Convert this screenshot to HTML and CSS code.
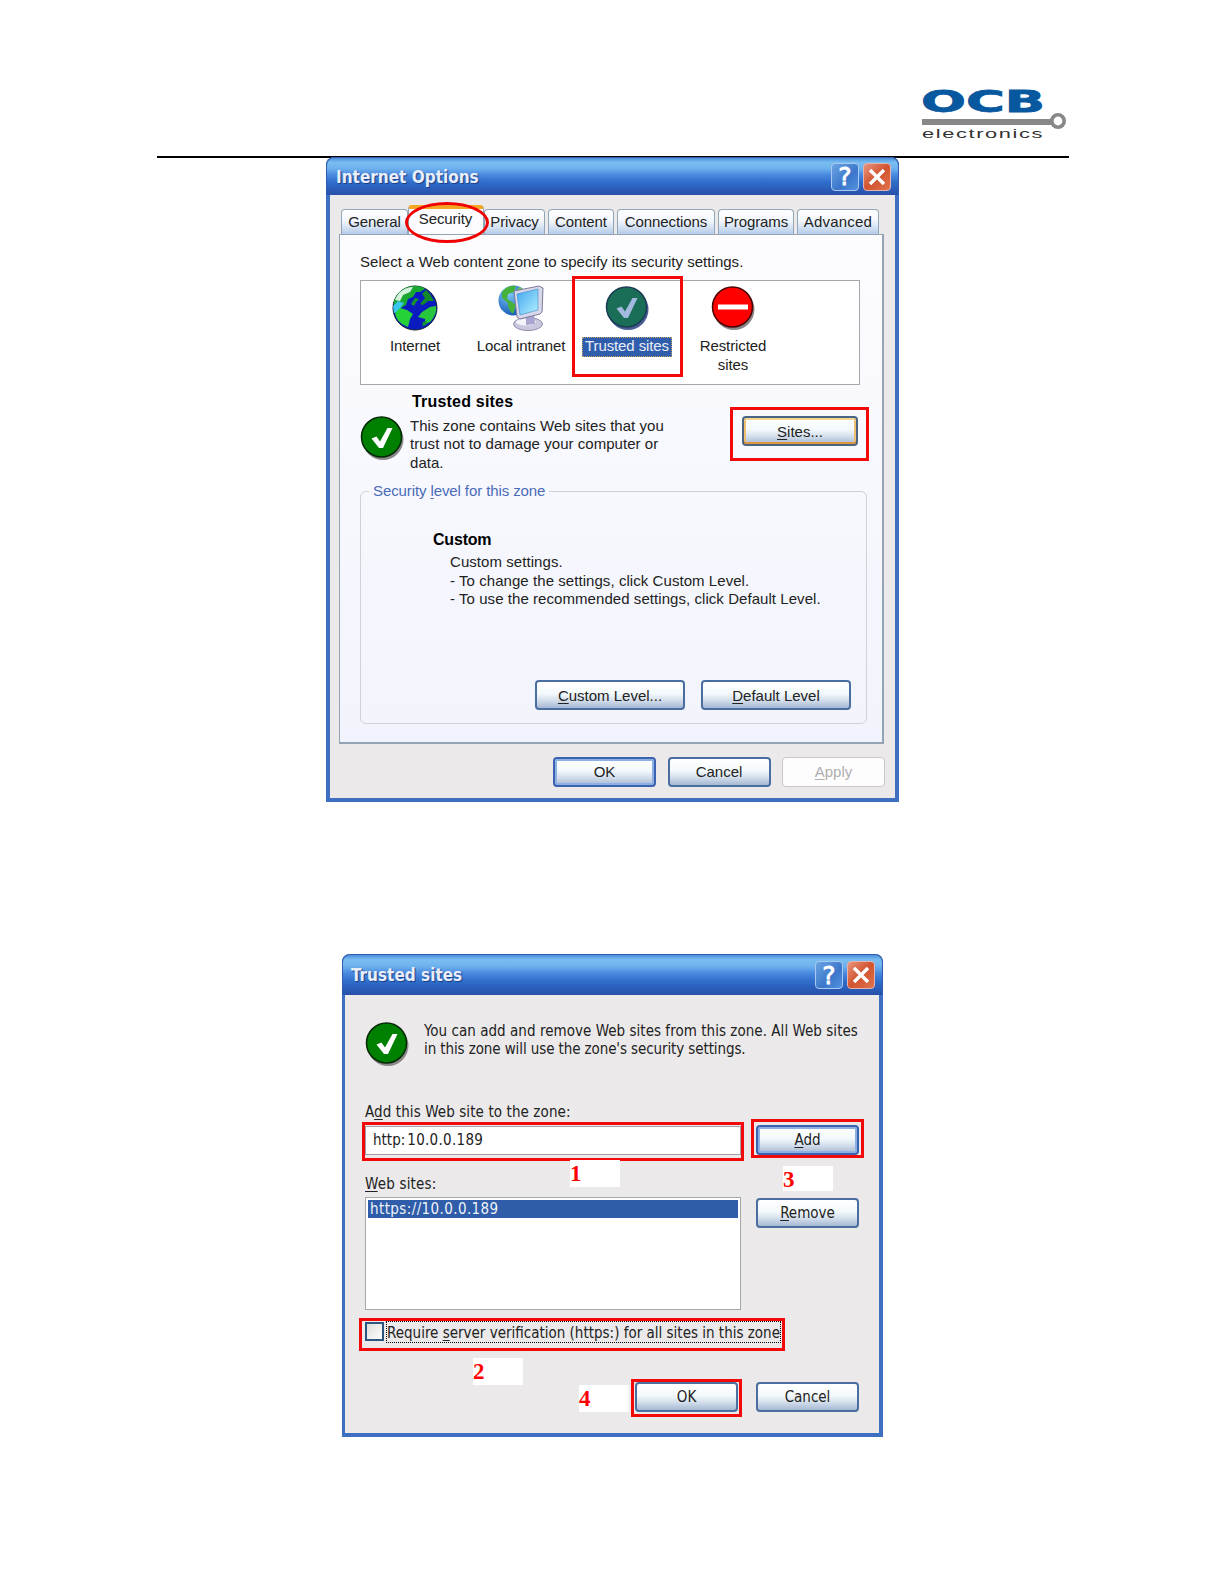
FILE: index.html
```html
<!DOCTYPE html>
<html lang="en">
<head>
	<meta charset="UTF-8">
	<title>Internet Options - Trusted sites</title>
	<link rel="stylesheet" href="styles.css">
</head>
<body>
<!-- shared icons -->
<svg class="defs">
	<defs>
		<linearGradient id="scr" x1="0" y1="0" x2="1" y2="1">
			<stop offset="0" stop-color="#3fa6f0"/>
			<stop offset="1" stop-color="#b5f0ff"/>
		</linearGradient>
		<radialGradient id="sea" cx=".35" cy=".3" r=".75">
			<stop offset="0" stop-color="#7cc8f5"/>
			<stop offset="1" stop-color="#1252b5"/>
		</radialGradient>
		<symbol id="ok" viewBox="0 0 44 44">
			<circle cx="23" cy="23.500" r="20.500" fill="#8b8789"/>
			<circle cx="21.500" cy="21" r="20" fill="#008000" stroke="#052905" stroke-width="1.500"/>
			<path d="M11.500 22.500l5-2 3.500 5L27.500 12h5L23 32h-4z" fill="#fff"/>
		</symbol>
		<symbol id="ok-sel" viewBox="0 0 44 44">
			<circle cx="23" cy="23.500" r="20.500" fill="#4a5c94"/>
			<circle cx="21.500" cy="21" r="20" fill="#1a6e57" stroke="#1b3d55" stroke-width="1.500"/>
			<path d="M11.500 22.500l5-2 3.500 5L27.500 12h5L23 32h-4z" fill="#a3b9df"/>
		</symbol>
	</defs>
</svg>

<div class="header">
	<svg class="logo" width="148" height="58" viewBox="0 0 148 58">
		<text class="logo-big" x="1" y="28" textLength="124" lengthAdjust="spacingAndGlyphs">OCB</text>
		<path d="M2 38h129" stroke="#878787" stroke-width="6"/>
		<circle cx="138" cy="37" r="6.200" fill="#fff" stroke="#878787" stroke-width="3.600"/>
		<text class="logo-small" x="2" y="54" textLength="122" lengthAdjust="spacingAndGlyphs">electronics</text>
	</svg>
</div>

<div class="window options">
	<div class="titlebar">
		<span class="title">Internet Options</span>
		<span class="tbtn help">?</span>
		<span class="tbtn close"><svg width="18" height="18" viewBox="0 0 18 18"><path d="M2 2l14 14M16 2L2 16"/></svg></span>
	</div>
	<div class="tabs">
		<span class="tab t1">General</span>
		<span class="tab t2 on">Security</span>
		<span class="tab t3">Privacy</span>
		<span class="tab t4">Content</span>
		<span class="tab t5">Connections</span>
		<span class="tab t6">Programs</span>
		<span class="tab t7">Advanced</span>
	</div>
	<div class="panel">
		<p class="intro">Select a Web content <u>z</u>one to specify its security settings.</p>
		<div class="zones">
			<div class="zone">
				<svg width="48" height="48" viewBox="0 0 48 48">
					<circle cx="24" cy="24" r="22" fill="#0a1bc0" stroke="#10202a" stroke-width="1"/>
					<path d="M3 17C6 8 14 2 24 2c5 0 8 1 10 3l-5 3-4 0-3 5-5 2-2 6-5 3-3-1-4 2z" fill="#19a832"/>
					<path d="M4 16C7 8 14 3 22 3l-3 5-7 3-3 6z" fill="#d5f3dc"/>
					<path d="M2 22l5-5 6 2-3 4-2 5-5 1z" fill="#38c5ee"/>
					<path d="M4 29l5-5 7 2 6 4-3 5-2 8-6-3c-4-3-6-6-7-11z" fill="#25d338"/>
					<path d="M45 22l-6 1-8 5-4 5 7 2 0 5 5-2c4-4 7-10 6-16z" fill="#28c63c"/>
					<path d="M35 6l4 4 4 7-6 0-5 4-3-1 5-6-3-4z" fill="#128a26"/>
					<path d="M24 14l4 1-3 3-2 4-3-2zM32 38l4-1-1 4-4 1z" fill="#18962c"/>
				</svg>
				<span>Internet</span>
			</div>
			<div class="zone">
				<svg width="48" height="48" viewBox="0 0 48 48">
					<circle cx="16.500" cy="16.500" r="15" fill="url(#sea)"/>
					<path d="M5 8c4-5 9-7 14-6l-2 6-6 2-1 5 5 3 4 3-3 9c-4-3-5-7-5-11L5 14z" fill="#46b23c"/>
					<path d="M22 3c3 1 5 3 7 6l-8 4-2-5z" fill="#67c34a"/>
					<ellipse cx="31" cy="40" rx="14.500" ry="6.500" fill="#c9c8de" stroke="#8f8cae"/>
					<ellipse cx="29" cy="38" rx="10" ry="3.500" fill="#f4f4fb"/>
					<path d="M29 29l8-1 1 12-9 1z" fill="#a9a5cf"/>
					<path d="M17 7l25-5 4 2-1 24-2 2-20 5-3-2z" fill="#d8d8ea" stroke="#7b7a9c"/>
					<path d="M20 10l21-5v21l-18 5z" fill="url(#scr)" stroke="#3b86c8" stroke-width=".6"/>
				</svg>
				<span>Local intranet</span>
			</div>
			<div class="zone selected">
				<svg width="44" height="48" viewBox="0 -2 44 48"><use href="#ok-sel" width="44" height="44"/></svg>
				<span>Trusted sites</span>
			</div>
			<div class="zone">
				<svg width="44" height="48" viewBox="0 -2 44 48">
					<circle cx="23" cy="23.500" r="20.500" fill="#8b8789"/>
					<circle cx="21.500" cy="21" r="20" fill="#f00" stroke="#4b0505" stroke-width="1.500"/>
					<path d="M7 21h30" stroke="#fff" stroke-width="5"/>
				</svg>
				<span>Restricted<br>sites</span>
			</div>
		</div>
		<div class="info">
			<svg class="info-icon" width="44" height="44"><use href="#ok"/></svg>
			<div class="info-text">
				<b>Trusted sites</b>
				<p>This zone contains Web sites that you<br>trust not to damage your computer or<br>data.</p>
			</div>
			<button class="btn sites"><u>S</u>ites...</button>
		</div>
		<fieldset class="level">
			<legend>Security <u>l</u>evel for this zone</legend>
			<b>Custom</b>
			<p>Custom settings.<br>- To change the settings, click Custom Level.<br>- To use the recommended settings, click Default Level.</p>
			<div class="level-btns">
				<button class="btn"><u>C</u>ustom Level...</button>
				<button class="btn"><u>D</u>efault Level</button>
			</div>
		</fieldset>
	</div>
	<div class="footer">
		<button class="btn default">OK</button>
		<button class="btn">Cancel</button>
		<button class="btn disabled"><u>A</u>pply</button>
	</div>
	<!-- red marks -->
	<i class="ring"></i>
	<i class="mark m-zone"></i>
	<i class="mark m-sites"></i>
</div>

<div class="window trusted">
	<div class="titlebar">
		<span class="title">Trusted sites</span>
		<span class="tbtn help">?</span>
		<span class="tbtn close"><svg width="18" height="18" viewBox="0 0 18 18"><path d="M2 2l14 14M16 2L2 16"/></svg></span>
	</div>
	<div class="content">
		<div class="about">
			<svg width="44" height="44"><use href="#ok"/></svg>
			<p>You can add and remove Web sites from this zone. All Web sites<br><span>in this zone will use the zone's security settings.</span></p>
		</div>
		<div class="label">A<u>d</u>d this Web site to the zone:</div>
		<div class="row">
			<div class="field">http:<span>10.0.0.189</span></div>
			<button class="btn default"><u>A</u>dd</button>
		</div>
		<div class="label l2"><u>W</u>eb sites:</div>
		<div class="row">
			<div class="list"><div class="item">https://10.0.0.189</div></div>
			<button class="btn remove"><u>R</u>emove</button>
		</div>
		<div class="check">
			<span class="box"></span>
			<span class="check-text">Require <u>s</u>erver verification (https:) for all sites in this zone</span>
		</div>
		<div class="actions">
			<button class="btn">OK</button>
			<button class="btn">Cancel</button>
		</div>
	</div>
	<!-- red marks -->
	<i class="mark m-field"></i>
	<i class="mark m-add"></i>
	<i class="mark m-check"></i>
	<i class="mark m-ok"></i>
	<span class="num n1">1</span>
	<span class="num n2">2</span>
	<span class="num n3">3</span>
	<span class="num n4">4</span>
</div>
</body>
</html>
```
FILE: styles.css
```css
body,p,fieldset,legend{
	margin: 0;
	padding: 0;
}
*{
	box-sizing: border-box;
}
body{
	background: #fff;
	color: #222;
}
svg{
	display: block;
}
u{
	text-underline-offset: 2px;
}
.defs{
	position: absolute;
	width: 0;
	height: 0;
}

/* page header */
.header{
	width: 912px;
	height: 158px;
	margin-left: 157px;
	padding: 84px 1px 0 0;
	border-bottom: 2px solid #000;
}
.logo{
	margin-left: auto;
	overflow: visible;
}
.logo-big{
	font: bold 30px "DejaVu Sans", sans-serif;
	fill: #07589f;
	stroke: #07589f;
	stroke-width: .8;
}
.logo-small{
	font: 13.500px "Liberation Sans", sans-serif;
	letter-spacing: 1px;
	fill: #333;
}

/* windows */
.window{
	position: relative;
	background: #ebe9ea;
	border: 4px solid #3f6fc0;
	border-top: 0;
	border-radius: 8px 8px 0 0;
}
.titlebar{
	display: flex;
	align-items: center;
	margin: 0 -4px;
	padding: 0 7px 0 9px;
	border: 1px solid #2e5db0;
	border-bottom: 0;
	border-radius: 8px 8px 0 0;
	background: linear-gradient(#4d8fdc 0, #79bdf0 12%, #6db2ee 28%, #4a8ae0 45%, #2f6fcb 65%, #2a5cb8 85%, #2a50a8 100%);
}
.title{
	flex: 1;
	font: bold 17px "DejaVu Sans Condensed", sans-serif;
	color: #e8eefa;
	text-shadow: 1px 1px 1px #1c3c85;
}
.tbtn{
	display: flex;
	align-items: center;
	justify-content: center;
	width: 28px;
	height: 28px;
	margin-left: 4px;
	border: 1px solid #a9c8ef;
	border-radius: 4px;
	font: 25px "DejaVu Sans", sans-serif;
	-webkit-text-stroke: .8px #fff;
	color: #fff;
}
.help{
	background: linear-gradient(135deg, #6ba4e2, #3b76cb 60%, #5495e0);
}
.close{
	background: linear-gradient(135deg, #e8957f, #d2532f 50%, #e07450);
	border-color: #e5b3ae;
}
.close path{
	stroke: #fff;
	stroke-width: 3.4;
}
.btn{
	width: 103px;
	height: 30px;
	padding: 1px 0 0;
	border: 2px solid #4a6ea0;
	border-radius: 4px;
	background: linear-gradient(#fff 0, #f3f9fb 45%, #d4dfec 70%, #a6b8d2 100%);
	font: inherit;
	color: inherit;
}
.default{
	border-color: #3a62b0;
	box-shadow: inset 0 0 0 2px #8db0e4;
}
.disabled{
	background: #fdfdfd;
	border: 1px solid #c9c7c8;
	color: #b0aeb0;
}

/* Internet Options */
.options{
	width: 573px;
	height: 645px;
	margin: -1px 0 0 326px;
	font: 15px/18.4px "Liberation Sans", sans-serif;
}
.options .titlebar{
	height: 38px;
}
.tabs{
	display: flex;
	align-items: flex-end;
	height: 39px;
	padding-left: 11px;
}
.tab{
	height: 25px;
	margin-right: 3px;
	border: 1px solid #91a7b9;
	border-bottom: 0;
	border-radius: 4px 4px 0 0;
	background: linear-gradient(#fff, #f2f6fc 45%, #b6cce9);
	text-align: center;
	line-height: 24px;
	letter-spacing: -.1px;
	white-space: nowrap;
}
.t1{ width: 67px; margin-right: 0; }
.t2{ width: 76px; margin-right: 0; }
.t3{ width: 61px; }
.t4{ width: 66px; }
.t5{ width: 98px; }
.t6{ width: 76px; }
.t7{ width: 82px; letter-spacing: .2px; }
.tab.on{
	height: 29px;
	padding-right: 1px;
	border-top: 4px solid #f5a623;
	background: #fcfcfe;
	line-height: 20px;
}
.panel{
	width: 545px;
	height: 510px;
	margin-left: 9px;
	padding: 18px 0 0 20px;
	border: 1px solid #94a4b4;
	border-right-width: 2px;
	border-bottom-width: 2px;
	background: linear-gradient(#fcfcfe, #f2f4fd);
}
.intro{
	letter-spacing: .03px;
}
.zones{
	display: flex;
	width: 500px;
	height: 105px;
	margin-top: 9px;
	padding: 3px 0 0 1px;
	border: 1px solid #a5a7aa;
	background: #fff;
}
.zone{
	display: flex;
	flex-direction: column;
	align-items: center;
	width: 106px;
	text-align: center;
	white-space: nowrap;
}
.zone span{
	margin-top: 5px;
	padding: 0 3px;
	line-height: 18.4px;
	letter-spacing: -.1px;
}
.selected span{
	height: 20px;
	background: #2f5dab;
	outline: 1px dotted #c9a264;
	outline-offset: -1px;
	color: #e8edf7;
}
.info{
	display: flex;
	width: 498px;
	height: 97px;
	padding-top: 8px;
}
.info-icon{
	margin-top: 23px;
}
.info-text{
	width: 270px;
	margin-left: 6px;
	white-space: nowrap;
}
.info-text b{
	margin-left: 2px;
}
.info-text p{
	margin-top: 5px;
	letter-spacing: .04px;
}
.options b{
	display: block;
	font-size: 16px;
	letter-spacing: .2px;
	color: #000;
}
.sites{
	width: 116px;
	margin: 23px 0 0 auto;
	border-color: #4c6483;
	box-shadow: inset 0 2px 0 #f6d58c, inset 0 -2px 0 #e0963a, inset 2px 0 0 #f0c070, inset -2px 0 0 #f0c070;
}
.level{
	width: 507px;
	height: 242px;
	border: 1px solid #cfd1d4;
	border-radius: 6px;
}
.level legend{
	margin-left: 8px;
	padding: 0 4px;
	color: #4a6cb8;
	letter-spacing: -.1px;
}
.level b{
	margin: 30px 0 0 72px;
	letter-spacing: -.2px;
}
.level p{
	margin: 4px 0 0 89px;
	letter-spacing: .06px;
	white-space: nowrap;
}
.level-btns{
	display: flex;
	justify-content: flex-end;
	gap: 16px;
	margin: 72px 15px 0 0;
}
.level-btns .btn{
	width: 150px;
}
.footer{
	display: flex;
	justify-content: flex-end;
	gap: 11.500px;
	margin: 13px 10px 0 0;
}

/* Trusted sites */
.trusted{
	width: 541px;
	height: 483px;
	margin: 152px 0 0 342px;
	border-width: 0 4px 4px 3px;
	font: 15px/18.4px "DejaVu Sans Condensed", sans-serif;
}
.trusted .titlebar{
	height: 41px;
	margin: 0 -4px 0 -3px;
	padding-left: 8px;
}
.trusted .btn{
	font-size: 15px;
}
.content{
	padding: 27px 20px 0;
}
.about{
	display: flex;
	gap: 15px;
	height: 81px;
	white-space: nowrap;
}
.about p{
	letter-spacing: .04px;
}
.about p span{
	letter-spacing: -.1px;
}
.label{
	height: 22px;
	letter-spacing: .1px;
}
.row{
	display: flex;
	justify-content: space-between;
}
.field{
	width: 376px;
	height: 29px;
	margin-top: 1px;
	padding-left: 7px;
	border: 1px solid #a5a0a8;
	background: #fff;
	line-height: 27px;
}
.field span{
	margin-left: 2px;
	letter-spacing: .3px;
}
.l2{
	margin-top: 20px;
	letter-spacing: .2px;
}
.list{
	width: 376px;
	height: 113px;
	padding: 2px;
	border: 1px solid #a5a7aa;
	background: #fff;
}
.item{
	padding-left: 2px;
	background: #2f5da9;
	color: #eef2f9;
	letter-spacing: .4px;
}
.remove{
	margin-top: 1px;
}
.check{
	display: flex;
	gap: 2px;
	margin-top: 11px;
	white-space: nowrap;
}
.box{
	width: 19px;
	height: 19px;
	margin-top: 1px;
	border: 2px solid #2b5580;
	background: linear-gradient(135deg, #dcdcda, #fff);
}
.check-text{
	height: 22px;
	border: 1px dotted #000;
	line-height: 22px;
}
.actions{
	display: flex;
	justify-content: flex-end;
	gap: 18px;
	margin-top: 39px;
}

/* marks lying over the windows */
.mark{
	position: absolute;
	border: 3px solid #f20a0a;
}
.ring{
	position: absolute;
	left: 75px;
	top: 45px;
	width: 84px;
	height: 41px;
	border: 3px solid #f00000;
	border-radius: 50%;
}
.m-zone{ left: 242px; top: 119px; width: 111px; height: 101px; }
.m-sites{ left: 400px; top: 250px; width: 139px; height: 54px; }
.m-field{ left: 17px; top: 168px; width: 382px; height: 39px; }
.m-add{ left: 406px; top: 165px; width: 113px; height: 39px; }
.m-check{ left: 14px; top: 364px; width: 426px; height: 33px; }
.m-ok{ left: 286px; top: 425px; width: 111px; height: 38px; }
.num{
	position: absolute;
	width: 50px;
	height: 27px;
	background: #fff;
	color: #f00;
	font: bold 23px/28px "Liberation Serif", serif;
}
.n1{ left: 225px; top: 206px; }
.n2{ left: 128px; top: 404px; }
.n3{ left: 438px; top: 212px; height: 25px; }
.n4{ left: 234px; top: 431px; }
```
